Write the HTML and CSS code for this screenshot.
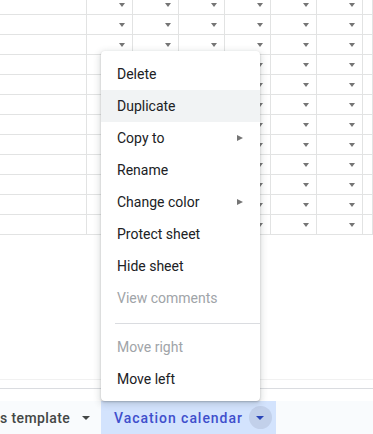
FILE: index.html
```html
<!DOCTYPE html>
<html lang="en">
<head>
  <meta charset="UTF-8" />
  <title>Sheet tab menu</title>
  <link rel="stylesheet" href="styles.css">
</head>
<body>

  <!-- Spreadsheet area: grid of cells with filter dropdowns -->
  <div class="sheet">
    <div class="grid">
      <div class="row"><span class="cell first"></span><span class="cell drop"></span><span class="cell drop"></span><span class="cell drop"></span><span class="cell drop"></span><span class="cell drop"></span><span class="cell drop"></span><span class="cell last"></span></div>
      <div class="row"><span class="cell first"></span><span class="cell drop"></span><span class="cell drop"></span><span class="cell drop"></span><span class="cell drop"></span><span class="cell drop"></span><span class="cell drop"></span><span class="cell last"></span></div>
      <div class="row"><span class="cell first"></span><span class="cell drop"></span><span class="cell drop"></span><span class="cell drop"></span><span class="cell drop"></span><span class="cell drop"></span><span class="cell drop"></span><span class="cell last"></span></div>
      <div class="row"><span class="cell first"></span><span class="cell drop"></span><span class="cell drop"></span><span class="cell drop"></span><span class="cell drop"></span><span class="cell drop"></span><span class="cell drop"></span><span class="cell last"></span></div>
      <div class="row"><span class="cell first"></span><span class="cell drop"></span><span class="cell drop"></span><span class="cell drop"></span><span class="cell drop"></span><span class="cell drop"></span><span class="cell drop"></span><span class="cell last"></span></div>
      <div class="row"><span class="cell first"></span><span class="cell drop"></span><span class="cell drop"></span><span class="cell drop"></span><span class="cell drop"></span><span class="cell drop"></span><span class="cell drop"></span><span class="cell last"></span></div>
      <div class="row"><span class="cell first"></span><span class="cell drop"></span><span class="cell drop"></span><span class="cell drop"></span><span class="cell drop"></span><span class="cell drop"></span><span class="cell drop"></span><span class="cell last"></span></div>
      <div class="row"><span class="cell first"></span><span class="cell drop"></span><span class="cell drop"></span><span class="cell drop"></span><span class="cell drop"></span><span class="cell drop"></span><span class="cell drop"></span><span class="cell last"></span></div>
      <div class="row"><span class="cell first"></span><span class="cell drop"></span><span class="cell drop"></span><span class="cell drop"></span><span class="cell drop"></span><span class="cell drop"></span><span class="cell drop"></span><span class="cell last"></span></div>
      <div class="row"><span class="cell first"></span><span class="cell drop"></span><span class="cell drop"></span><span class="cell drop"></span><span class="cell drop"></span><span class="cell drop"></span><span class="cell drop"></span><span class="cell last"></span></div>
      <div class="row"><span class="cell first"></span><span class="cell drop"></span><span class="cell drop"></span><span class="cell drop"></span><span class="cell drop"></span><span class="cell drop"></span><span class="cell drop"></span><span class="cell last"></span></div>
      <div class="row"><span class="cell first"></span><span class="cell drop"></span><span class="cell drop"></span><span class="cell drop"></span><span class="cell drop"></span><span class="cell drop"></span><span class="cell drop"></span><span class="cell last"></span></div>
    </div>
    <div class="spacer"></div>
    <div class="hscroll"></div>
    <div class="hbar"></div>
  </div>

  <!-- Sheet tabs -->
  <div class="tabs">
    <div class="tab">
      <span class="tab-name">s template</span>
      <span class="tab-caret"></span>
    </div>
    <div class="tab active">
      <span class="tab-name">Vacation calendar</span>
      <span class="tab-btn"><span class="tab-caret"></span></span>
    </div>
  </div>

  <!-- Context menu for the active tab -->
  <div class="menu">
    <div class="item">Delete</div>
    <div class="item hover">Duplicate</div>
    <div class="item sub">Copy to</div>
    <div class="item">Rename</div>
    <div class="item sub">Change color</div>
    <div class="item">Protect sheet</div>
    <div class="item">Hide sheet</div>
    <div class="item disabled">View comments</div>
    <div class="sep"></div>
    <div class="item disabled">Move right</div>
    <div class="item">Move left</div>
  </div>

</body>
</html>
```

FILE: styles.css
```css
html, body {
  margin: 0;
  padding: 0;
  height: 100%;
  overflow: hidden;
  background: #fff;
  font-family: Roboto, "Noto Sans", sans-serif;
}

/* grid area above the tab bar */
.sheet {
  height: 401px;
  display: flex;
  flex-direction: column;
}

.grid {
  margin-top: -5px;
}

.row {
  display: flex;
  height: 20px;
}

.cell {
  box-sizing: border-box;
  width: 46px;
  height: 20px;
  flex-shrink: 0;
  border-right: 1px solid #e2e3e3;
  border-bottom: 1px solid #e2e3e3;
  display: flex;
  align-items: center;
  justify-content: flex-end;
  padding-right: 7px;
}
.cell.first { width: 87px; }
.cell.last  { flex: 1; }

/* little filter arrow in each cell */
.cell.drop::after {
  content: "";
  width: 0;
  height: 0;
  border-left: 3.5px solid transparent;
  border-right: 3.5px solid transparent;
  border-top: 4px solid #757575;
}

.spacer { flex: 1; }

.hscroll {
  height: 8px;
  border-top: 1px solid #f1f1f1;
}
.hbar {
  height: 12px;
  border-top: 1px solid #dadce0;
}

/* tab bar */
.tabs {
  height: 33px;
  background: #f9fbfd;
  display: flex;
}

.tab {
  box-sizing: border-box;
  width: 101px;
  flex-shrink: 0;
  display: flex;
  align-items: center;
  font-size: 14px;
  font-weight: 500;
  letter-spacing: 0.4px;
  color: #444746;
}
.tab .tab-name { margin-right: 12px; }

.tab-caret {
  width: 0;
  height: 0;
  border-left: 4px solid transparent;
  border-right: 4px solid transparent;
  border-top: 4px solid #444746;
}

.tab.active {
  width: auto;
  background: #d3e3fd;
  color: #3f4fcc;
  padding: 0 4px 0 13px;
  letter-spacing: 0.95px;
}
.tab.active .tab-name { margin-right: 6px; }

.tab-btn {
  width: 23px;
  height: 23px;
  border-radius: 50%;
  background: #c2d0ea;
  display: flex;
  align-items: center;
  justify-content: center;
}
.tab-btn .tab-caret { border-top-color: #2a45b8; }

/* context menu */
.menu {
  position: absolute;
  left: 101px;
  top: 51px;
  width: 159px;
  padding: 7px 0 6px;
  background: #fff;
  border-radius: 4px;
  box-shadow: 0 2px 6px 2px rgba(60, 64, 67, 0.15), 0 1px 2px rgba(60, 64, 67, 0.3);
  z-index: 2;
}

.item {
  height: 32px;
  line-height: 32px;
  padding: 0 17px 0 16px;
  font-size: 14px;
  color: #202124;
  display: flex;
  justify-content: space-between;
  align-items: center;
}
.item.hover { background: #f1f3f4; }
.item.disabled { color: #a0a4a8; }

.item.sub::after {
  content: "";
  width: 0;
  height: 0;
  border-top: 3.5px solid transparent;
  border-bottom: 3.5px solid transparent;
  border-left: 6px solid #757575;
}

.sep {
  margin: 9px 0 7px 14px;
  border-top: 1px solid #dadce0;
}
```
